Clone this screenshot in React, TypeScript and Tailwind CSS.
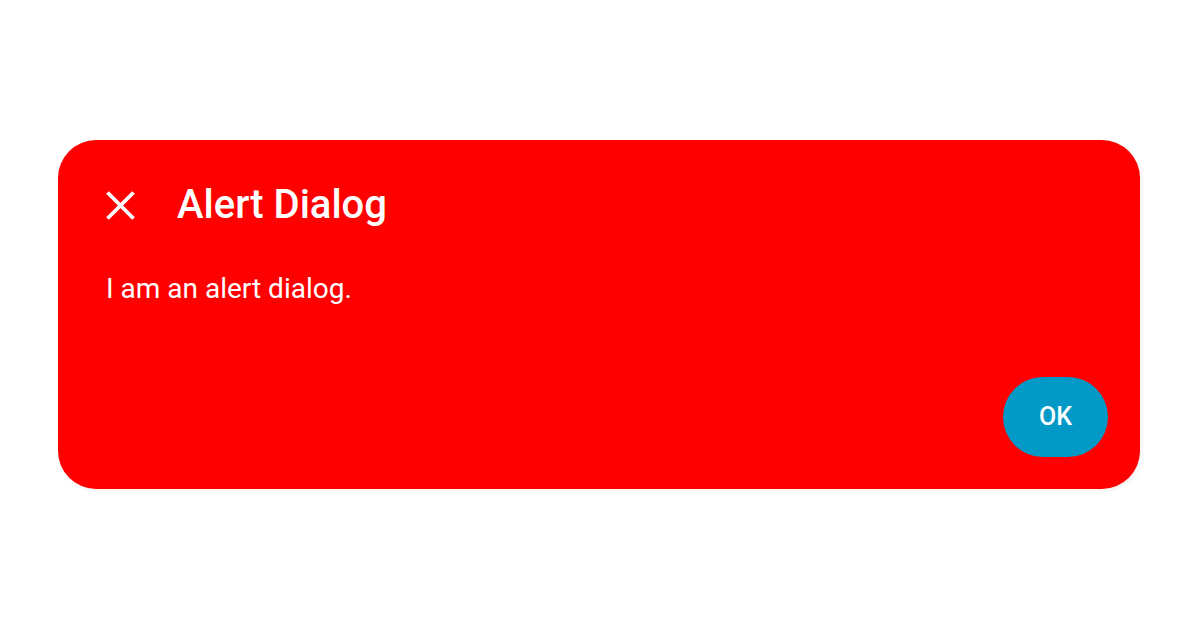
import React from 'react';

function CloseIcon() {
  return (
    <svg width="32" height="32" viewBox="0 0 32 32" fill="none" stroke="white" strokeWidth="3.8" strokeLinecap="butt">
      <path d="M3.5 3.5 L29.5 29.5 M29.5 3.5 L3.5 29.5" />
    </svg>
  );
}

export default function App() {
  return (
    <div className="flex h-screen w-full items-start bg-white pl-[58px] pt-[140px] font-['Roboto',sans-serif]">
      <div className="flex h-[349px] w-[1082px] flex-col rounded-[38px] bg-[#ff0000] pb-8 pl-[46px] pr-8 pt-[46px] text-white shadow-[2px_2px_4px_rgba(0,0,0,0.06)]">
        <div className="flex h-[38px] items-center">
          <CloseIcon />
          <h2 className="ml-[41px] text-[40px] font-medium leading-none">Alert Dialog</h2>
        </div>
        <p className="ml-[2px] mt-[51px] text-[28px] leading-none">I am an alert dialog.</p>
        <div className="flex flex-1 items-end justify-end">
          <button className="h-[80px] w-[105px] rounded-full bg-[#0399c6] text-[25px] font-medium text-white">
            OK
          </button>
        </div>
      </div>
    </div>
  );
}
